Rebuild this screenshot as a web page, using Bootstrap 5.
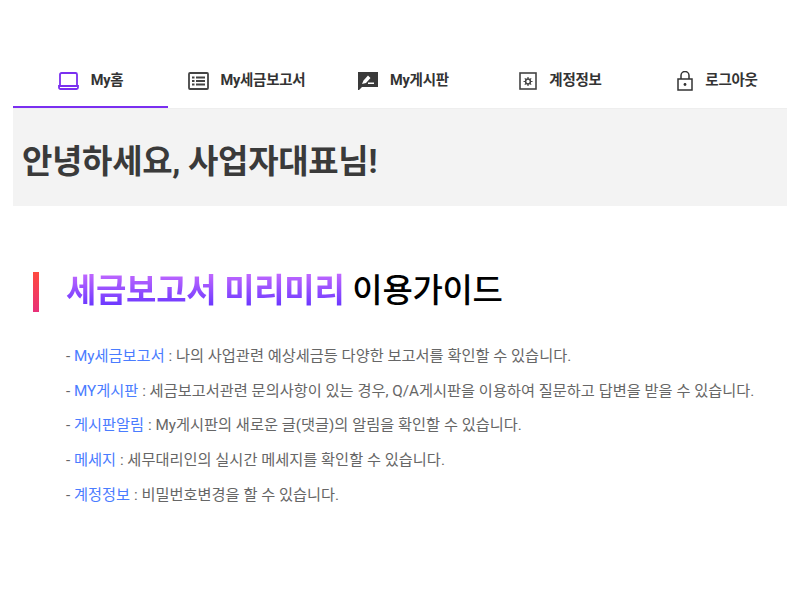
<!DOCTYPE html>
<html lang="ko">
<head>
  <meta charset="UTF-8" />
  <meta name="viewport" content="width=device-width, initial-scale=1" />
  <title>My홈</title>
  <link href="https://cdn.jsdelivr.net/npm/bootstrap@5.3.0/dist/css/bootstrap.min.css" rel="stylesheet" />
  <style>
    body {
      font-family: Roboto, "Noto Sans CJK KR", sans-serif;
      color: #333;
      background: #fff;
    }
    .page-wrap {
      margin: 0 13px;
      padding-top: 54px;
    }
    .top-tabs {
      border-bottom: 1px solid #eee;
    }
    .tab-row {
      margin-right: -9px;
    }
    .top-tab {
      flex: 0 0 157px;
      height: 54px;
      padding-top: 1px;
      color: #333;
      font-size: 14.5px;
      font-weight: 700;
      text-decoration: none;
      letter-spacing: -0.25px;
      gap: 12px;
      border-bottom: 2px solid transparent;
    }
    .top-tab.active {
      flex-basis: 155px;
      border-bottom-color: #7a2ff0;
    }
    .top-tab svg {
      flex: none;
    }
    .hello-box {
      height: 97px;
      background: #f3f3f3;
      padding: 8px 0 0 9px;
    }
    .hello-box h1 {
      font-size: 33px;
      font-weight: 700;
      color: #3a3a3a;
      letter-spacing: -0.3px;
      margin: 0;
    }
    .guide-title {
      margin: 66px 0 0 20px;
      height: 40px;
      border-left: 6px solid;
      border-image: linear-gradient(180deg, #ff4a3d, #e8307a) 1;
      padding-left: 27px;
      font-size: 33px;
      font-weight: 500;
      line-height: 38px;
      color: #000;
      letter-spacing: -0.3px;
    }
    .grad-text {
      font-weight: 700;
      background: linear-gradient(180deg, #c86cff, #5f30ff);
      -webkit-background-clip: text;
      background-clip: text;
      color: transparent;
    }
    .guide-list {
      margin: 27px 0 0 53px;
      padding: 0;
      list-style: none;
      font-size: 15.25px;
      color: #666;
    }
    .guide-list li {
      height: 34.7px;
      line-height: 34.7px;
      white-space: nowrap;
    }
    .guide-list b {
      font-weight: 400;
      color: #4a7cff;
    }
  </style>
</head>
<body>

<div class="page-wrap">
  <nav class="top-tabs">
    <div class="tab-row d-flex">
      <a href="#" class="top-tab active d-flex align-items-center justify-content-center">
        <svg width="21" height="18" viewBox="0 0 21 18" fill="none" stroke="#7a2ff0" stroke-width="1.800"><path d="M2 14V2.500a1.500 1.500 0 0 1 1.500-1.500h14A1.500 1.500 0 0 1 19 2.500V14"/><path d="M1 14h19v1.500a1.500 1.500 0 0 1-1.500 1.500h-16A1.500 1.500 0 0 1 1 15.500z"/></svg>
        <span>My홈</span>
      </a>
      <a href="#" class="top-tab d-flex align-items-center justify-content-center">
        <svg width="21" height="18" viewBox="0 0 21 18" fill="none" stroke="#444" stroke-width="1.800"><rect x="1" y="1" width="19" height="16" rx="1"/><path d="M4 5.500h2.500M4 9h2.500M4 12.500h2.500M8 5.500h9M8 9h9M8 12.500h9"/></svg>
        <span>My세금보고서</span>
      </a>
      <a href="#" class="top-tab d-flex align-items-center justify-content-center">
        <svg width="20" height="18" viewBox="0 0 20 18"><path fill="#3a3a3a" d="M0 0h20v15H4l-3 3H0z"/><path fill="#fff" d="M4 12l1.500-3.500L10 3.500l2.500 2.500L8 11zM10 10.500h6V12h-6z"/></svg>
        <span>My게시판</span>
      </a>
      <a href="#" class="top-tab d-flex align-items-center justify-content-center">
        <svg width="18" height="18" viewBox="0 0 18 18" fill="none" stroke="#444"><rect x="1" y="1" width="16" height="16" stroke-width="1.600"/><circle cx="9" cy="9.500" r="2.400" stroke-width="1.500"/><path d="M9 5v2M9 12v2M4.500 9.500h2M11.500 9.500h2M5.800 6.300l1.500 1.500M10.700 11.200l1.500 1.500M12.200 6.300l-1.500 1.500M7.300 11.200l-1.500 1.500" stroke-width="1.200"/></svg>
        <span>계정정보</span>
      </a>
      <a href="#" class="top-tab d-flex align-items-center justify-content-center">
        <svg width="16" height="20" viewBox="0 0 16 20" fill="none" stroke="#333" stroke-width="1.500"><rect x="1" y="8" width="14" height="11"/><path d="M4 8V4.500a4 4 0 0 1 8 0V8"/><circle cx="8" cy="13.500" r="1.400" fill="#333" stroke="none"/></svg>
        <span>로그아웃</span>
      </a>
    </div>
  </nav>

  <div class="hello-box d-flex align-items-center">
    <h1>안녕하세요, 사업자대표님!</h1>
  </div>

  <h2 class="guide-title"><span class="grad-text">세금보고서 미리미리</span> 이용가이드</h2>

  <ul class="guide-list">
    <li>- <b>My세금보고서</b> : 나의 사업관련 예상세금등 다양한 보고서를 확인할 수 있습니다.</li>
    <li>- <b>MY게시판</b> : 세금보고서관련 문의사항이 있는 경우, Q/A게시판을 이용하여 질문하고 답변을 받을 수 있습니다.</li>
    <li>- <b>게시판알림</b> : My게시판의 새로운 글(댓글)의 알림을 확인할 수 있습니다.</li>
    <li>- <b>메세지</b> : 세무대리인의 실시간 메세지를 확인할 수 있습니다.</li>
    <li>- <b>계정정보</b> : 비밀번호변경을 할 수 있습니다.</li>
  </ul>
</div>

<script src="https://cdn.jsdelivr.net/npm/bootstrap@5.3.0/dist/js/bootstrap.bundle.min.js"></script>
</body>
</html>
